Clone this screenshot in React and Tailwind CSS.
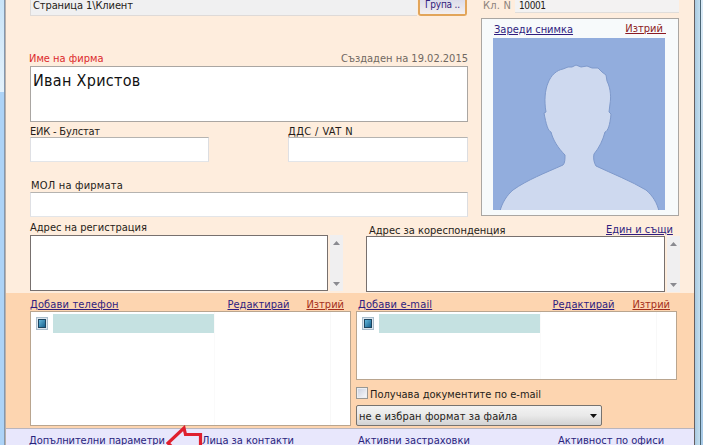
import React from "react";

const cx = (...c) => c.join(" ");

function T({ children, className = "" }) {
  return <span className={cx("block h-[14px] w-max shrink-0 whitespace-pre leading-[16px]", className)}>{children}</span>;
}

function Link({ children, className = "", color = "text-[#2f1d80]" }) {
  return <T className={cx("underline underline-offset-[1px] decoration-1", color, className)}>{children}</T>;
}

function Scroll() {
  return (
    <div className="ml-[2px] flex h-full w-[13px] flex-col items-center justify-between bg-[#f0eff0] pt-[6px] pb-[5px]">
      <svg width="7" height="4"><path d="M0 4L3.5 0L7 4z" fill="#8a8a90" /></svg>
      <svg width="7" height="4"><path d="M0 0L3.5 4L7 0z" fill="#8a8a90" /></svg>
    </div>
  );
}

function Marker() {
  return (
    <div className="mt-[5px] ml-[5px] h-[13px] w-[12px] border border-[#a9bccb] bg-[#dce6ee] p-px">
      <div className="h-full w-full border border-[#1d4560] bg-linear-to-br from-[#65b9dc] to-[#14628f]" />
    </div>
  );
}

function List({ className }) {
  return (
    <div className={cx("flex w-[321px] border border-[#b9a58f] bg-white", className)}>
      <Marker />
      <div className="ml-[5px] h-full w-[162px] border-r border-[#fafafa] pt-[2px]">
        <div className="h-[19px] bg-[#c5e1e1]" />
      </div>
      <div className="h-full w-[116px] border-r border-[#f8f8f8]" />
    </div>
  );
}

function Input({ className }) {
  return <div className={cx("h-[25px] border border-t-[#b5b3b0] border-r-[#dcdde0] border-b-[#e3e5e8] border-l-[#dfe0e4] bg-white", className)} />;
}

function Portrait() {
  return (
    <svg width="172" height="172" viewBox="0 0 172 172" className="ml-[11px] block">
      <rect width="172" height="172" fill="#92addd" />
      <path
        d="M7 173C9 165 14 157 20 152C34 142 52 135 70 127C72 125 72 121 72 117C65 110 60 102 58 94C55 93 53 86 51 75L53 74C51 63 52 52 55 45C58 37 64 32 70 31L75 29L79 29L83 27L88 29L94 28L99 30L105 30L109 34L113 37L114 43C118 51 118 60 117 66L116 74L118 76C117 87 115 93 112 94C110 102 106 110 101 116C100 120 101 125 103 128C120 136 138 143 153 152C160 158 164 165 166 173Z"
        fill="#ced9ef" stroke="#7e99cb" strokeWidth="1"
      />
    </svg>
  );
}

export default function App() {
  return (
    <div className="flex h-[445px] w-[703px] overflow-hidden bg-[#feeddd] text-[11px] text-[#251c18] [font-family:'DejaVu_Sans_Condensed','DejaVu_Sans','Noto_Sans',sans-serif]">
      <div className="flex w-[6px] shrink-0">
        <div className="flex w-[4px] flex-col">
          <div className="h-[92px] bg-linear-to-b from-[#c9e4f8] to-[#e4f2fc]" />
          <div className="flex-1 bg-[#add3f7]" />
        </div>
        <div className="w-px bg-[#8497ad]" />
        <div className="w-px bg-[#b9b0aa]" />
      </div>

      <div className="flex w-[688px] shrink-0 flex-col">
        <div className="flex h-[220px]">
          <div className="ml-[23px] flex w-[439px] flex-col">
            <div className="flex h-[16px]">
              <div className="ml-px h-[16px] w-[387px] border-b border-l border-[#dedad8] bg-[#f0f0f1] pl-[2px]">
                <T className="h-[12px]! leading-[11px]! tracking-[-0.1px]">Страница 1\Клиент</T>
              </div>
              <div className="ml-px h-[16px] w-[49px] rounded-b-[3px] border-2 border-t-0 border-[#e2a55a] bg-linear-to-b from-[#dcdcea] to-[#f4efee]">
                <T className="ml-[5px] h-[10px]! text-[10px] leading-[9px]! tracking-[-0.2px] text-[#32217c]">Група ..</T>
              </div>
            </div>
            <div className="mt-[35px] flex h-[15px] justify-between">
              <T className="text-[#dc2a2c]">Име на фирма</T>
              <T className="text-[#706861]">Създаден на 19.02.2015</T>
            </div>
            <div className="ml-px h-[56px] w-[438px] border border-[#aaa6a2] bg-white pt-[4px] pl-[2px] text-[16px] leading-[20px] tracking-[0.3px] text-[#111] whitespace-nowrap">
              <span>Иван Христов</span>
            </div>
            <div className="mt-[2px] flex h-[13px]">
              <T className="ml-px w-[258px]! tracking-[-0.2px]">ЕИК - Булстат</T>
              <T className="tracking-[0.4px]">ДДС / VAT N</T>
            </div>
            <div className="ml-px flex justify-between">
              <Input className="w-[179px]" />
              <Input className="w-[180px]" />
            </div>
            <T className="mt-[16px] ml-[2px] tracking-[0.2px]">МОЛ на фирмата</T>
            <Input className="ml-px w-[438px]" />
          </div>

          <div className="ml-[13px] w-[198px]">
            <div className="flex h-[13px]">
              <T className="ml-[2px] h-[12px]! w-[32px]! leading-[11px]! tracking-[0.2px] text-[#8d847c]">Кл. N</T>
              <div className="h-[13px] w-[164px] border-b border-[#e0ddda] bg-[#f3f2f2] pl-[4px]">
                <T className="h-[12px]! text-[10px] leading-[11px]! tracking-[-0.4px]">10001</T>
              </div>
            </div>
            <div className="mt-[5px] h-[198px] w-[198px] border border-[#aaa6a2] bg-[#f7fafb]">
              <div className="flex h-[19px] pt-[3px]">
                <Link className="ml-[12px]">Зареди снимка</Link>
                <Link className="-mt-px mr-[12px] ml-auto" color="text-[#8c1a22]">{"Изтрий "}</Link>
              </div>
              <Portrait />
            </div>
          </div>
        </div>

        <div className="flex h-[73px]">
          <div className="ml-[23px] w-[337px]">
            <T className="ml-px">Адрес на регистрация</T>
            <div className="mt-px ml-px flex h-[56px]">
              <div className="w-[298px] border border-[#77706e] bg-white" />
              <Scroll />
            </div>
          </div>
          <div className="w-[314px] pt-[3px]">
            <div className="flex h-[13px] pl-[3px]">
              <T className="w-[237px]!">Адрес за кореспонденция</T>
              <Link className="-mt-px">Един и същи</Link>
            </div>
            <div className="flex h-[56px]">
              <div className="w-[299px] border border-[#77706e] bg-white" />
              <Scroll />
            </div>
          </div>
        </div>

        <div className="flex h-[135px] bg-[#fdd5b0] pt-[4px]">
          <div className="ml-[24px] w-[326px]">
            <div className="flex h-[14px]">
              <Link className="tracking-[0.15px]">Добави телефон</Link>
              <Link className="ml-auto">Редактирай</Link>
              <Link className="mr-[12px] ml-[17px]" color="text-[#a5301c]">Изтрий</Link>
            </div>
            <List className="h-[115px]" />
          </div>
          <div className="w-[321px]">
            <div className="flex h-[14px] pl-[2px]">
              <Link className="tracking-[0.15px]">Добави e-mail</Link>
              <Link className="ml-auto">Редактирай</Link>
              <Link className="mr-[7px] ml-[18px]" color="text-[#a5301c]">Изтрий</Link>
            </div>
            <List className="h-[69px]" />
            <div className="mt-[7px] flex h-[14px]">
              <div className="h-[12px] w-[12px] border border-[#989793] bg-linear-to-br from-[#c9cfdf] to-[#fafafa] shadow-[inset_0_0_0_1px_#eceef2]" />
              <T className="ml-[2px]">Получава документите по e-mail</T>
            </div>
            <div className="mt-[4px] flex h-[21px] w-[246px] items-center justify-between rounded-[2px] border border-[#77736f] bg-linear-to-b from-[#f3f3f3] via-[#e9e9e9] to-[#d2d2d2] pr-[4px] pl-[2px]">
              <T className="leading-[15px]! tracking-[0.1px]">не е избран формат за файла</T>
              <svg width="7" height="4"><path d="M0 0H7L3.5 4z" fill="#111" /></svg>
            </div>
          </div>
        </div>

        <div className="relative flex h-[17px] border-t border-[#b9b5bd] bg-[#e8e7fc] pt-[5px] pl-[23px] text-[#29247d]">
          <T className="w-[173px]! leading-[14px]! tracking-[-0.08px]">Допълнителни параметри</T>
          <T className="w-[156px]! leading-[14px]! tracking-[-0.05px]">Лица за контакти</T>
          <T className="w-[200px]! leading-[14px]!">Активни застраховки</T>
          <T className="leading-[14px]!">Активност по офиси</T>
          <svg className="absolute -top-[4px] left-[160px]" width="38" height="21" viewBox="0 0 38 21">
            <path d="M1 19L17 4L20 4V10H34.5V21H8Z" fill="#e8e7fc" />
            <path d="M6 22L2 18L18 3L19.5 9.5H34.5V22" fill="none" stroke="#df1f2d" strokeWidth="3.2" />
          </svg>
        </div>
      </div>

      <div className="flex w-[9px] shrink-0">
        <div className="w-px bg-[#665f60]" />
        <div className="w-[5px] bg-linear-to-r from-[#a9cae0] to-[#c5dfef]" />
        <div className="w-px bg-[#4a6676]" />
        <div className="flex-1 bg-linear-to-b from-[#dcecf8] via-[#b5cde0] to-[#a9cbe8]" />
      </div>
    </div>
  );
}
